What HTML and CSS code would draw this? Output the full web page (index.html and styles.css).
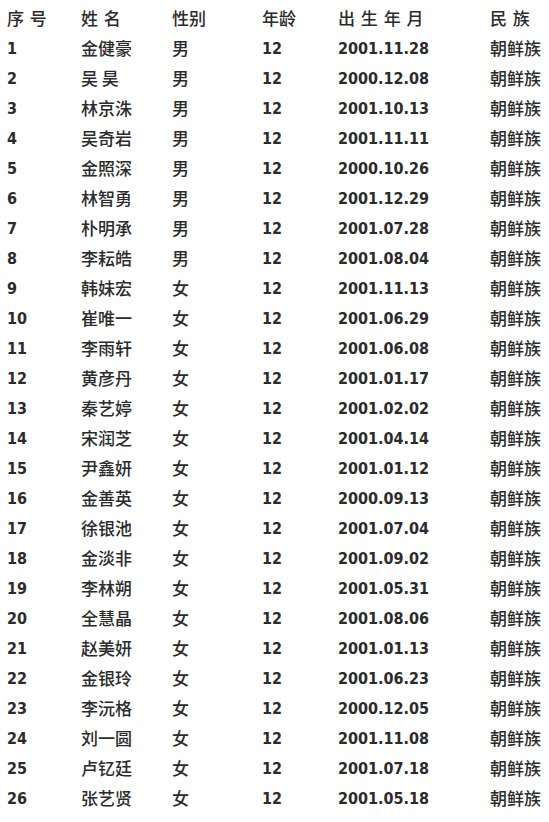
FILE: index.html
```html
<!DOCTYPE html>
<html lang="zh">
<head>
<meta charset="utf-8">
<title>名单</title>
<link rel="stylesheet" href="styles.css">
</head>
<body>
<table class="roster">
<thead>
<tr><th class="c1">序 号</th><th class="c2">姓 名</th><th class="c3">性别</th><th class="c4">年龄</th><th class="c5">出 生 年 月</th><th class="c6">民 族</th></tr>
</thead>
<tbody>
<tr><td class="n">1</td><td>金健豪</td><td>男</td><td class="n">12</td><td class="n">2001.11.28</td><td>朝鲜族</td></tr>
<tr><td class="n">2</td><td>吴 昊</td><td>男</td><td class="n">12</td><td class="n">2000.12.08</td><td>朝鲜族</td></tr>
<tr><td class="n">3</td><td>林京洙</td><td>男</td><td class="n">12</td><td class="n">2001.10.13</td><td>朝鲜族</td></tr>
<tr><td class="n">4</td><td>吴奇岩</td><td>男</td><td class="n">12</td><td class="n">2001.11.11</td><td>朝鲜族</td></tr>
<tr><td class="n">5</td><td>金照深</td><td>男</td><td class="n">12</td><td class="n">2000.10.26</td><td>朝鲜族</td></tr>
<tr><td class="n">6</td><td>林智勇</td><td>男</td><td class="n">12</td><td class="n">2001.12.29</td><td>朝鲜族</td></tr>
<tr><td class="n">7</td><td>朴明承</td><td>男</td><td class="n">12</td><td class="n">2001.07.28</td><td>朝鲜族</td></tr>
<tr><td class="n">8</td><td>李耘皓</td><td>男</td><td class="n">12</td><td class="n">2001.08.04</td><td>朝鲜族</td></tr>
<tr><td class="n">9</td><td>韩妹宏</td><td>女</td><td class="n">12</td><td class="n">2001.11.13</td><td>朝鲜族</td></tr>
<tr><td class="n">10</td><td>崔唯一</td><td>女</td><td class="n">12</td><td class="n">2001.06.29</td><td>朝鲜族</td></tr>
<tr><td class="n">11</td><td>李雨轩</td><td>女</td><td class="n">12</td><td class="n">2001.06.08</td><td>朝鲜族</td></tr>
<tr><td class="n">12</td><td>黄彦丹</td><td>女</td><td class="n">12</td><td class="n">2001.01.17</td><td>朝鲜族</td></tr>
<tr><td class="n">13</td><td>秦艺婷</td><td>女</td><td class="n">12</td><td class="n">2001.02.02</td><td>朝鲜族</td></tr>
<tr><td class="n">14</td><td>宋润芝</td><td>女</td><td class="n">12</td><td class="n">2001.04.14</td><td>朝鲜族</td></tr>
<tr><td class="n">15</td><td>尹鑫妍</td><td>女</td><td class="n">12</td><td class="n">2001.01.12</td><td>朝鲜族</td></tr>
<tr><td class="n">16</td><td>金善英</td><td>女</td><td class="n">12</td><td class="n">2000.09.13</td><td>朝鲜族</td></tr>
<tr><td class="n">17</td><td>徐银池</td><td>女</td><td class="n">12</td><td class="n">2001.07.04</td><td>朝鲜族</td></tr>
<tr><td class="n">18</td><td>金淡非</td><td>女</td><td class="n">12</td><td class="n">2001.09.02</td><td>朝鲜族</td></tr>
<tr><td class="n">19</td><td>李林朔</td><td>女</td><td class="n">12</td><td class="n">2001.05.31</td><td>朝鲜族</td></tr>
<tr><td class="n">20</td><td>全慧晶</td><td>女</td><td class="n">12</td><td class="n">2001.08.06</td><td>朝鲜族</td></tr>
<tr><td class="n">21</td><td>赵美妍</td><td>女</td><td class="n">12</td><td class="n">2001.01.13</td><td>朝鲜族</td></tr>
<tr><td class="n">22</td><td>金银玲</td><td>女</td><td class="n">12</td><td class="n">2001.06.23</td><td>朝鲜族</td></tr>
<tr><td class="n">23</td><td>李沅格</td><td>女</td><td class="n">12</td><td class="n">2000.12.05</td><td>朝鲜族</td></tr>
<tr><td class="n">24</td><td>刘一圆</td><td>女</td><td class="n">12</td><td class="n">2001.11.08</td><td>朝鲜族</td></tr>
<tr><td class="n">25</td><td>卢钇廷</td><td>女</td><td class="n">12</td><td class="n">2001.07.18</td><td>朝鲜族</td></tr>
<tr><td class="n">26</td><td>张艺贤</td><td>女</td><td class="n">12</td><td class="n">2001.05.18</td><td>朝鲜族</td></tr>
</tbody>
</table>
</body>
</html>
```

FILE: styles.css
```css
html, body {
  background: #ffffff;
}
body {
  margin: 3px 0 0 7px;
  color: #2b2b2b;
  font-family: "Noto Sans CJK SC", sans-serif;
}
.roster {
  border-collapse: collapse;
  table-layout: fixed;
  width: 542px;
}
.roster th,
.roster td {
  height: 30px;
  padding: 0;
  text-align: left;
  vertical-align: middle;
  font-size: 17px;
  font-weight: 500;
  line-height: 30px;
  white-space: pre;
}
.roster th {
  word-spacing: 2px;
}
.roster .c1 { width: 74px; }
.roster .c2 { width: 91px; }
.roster .c3 { width: 90px; }
.roster .c4 { width: 76px; }
.roster .c5 { width: 152px; }
.roster .c6 { width: auto; }
.roster td.n {
  height: auto;
  padding-top: 2px;
  line-height: 28px;
  font-family: "DejaVu Sans Condensed", "DejaVu Sans", sans-serif;
  font-stretch: condensed;
  font-weight: bold;
  font-size: 16px;
}
```
